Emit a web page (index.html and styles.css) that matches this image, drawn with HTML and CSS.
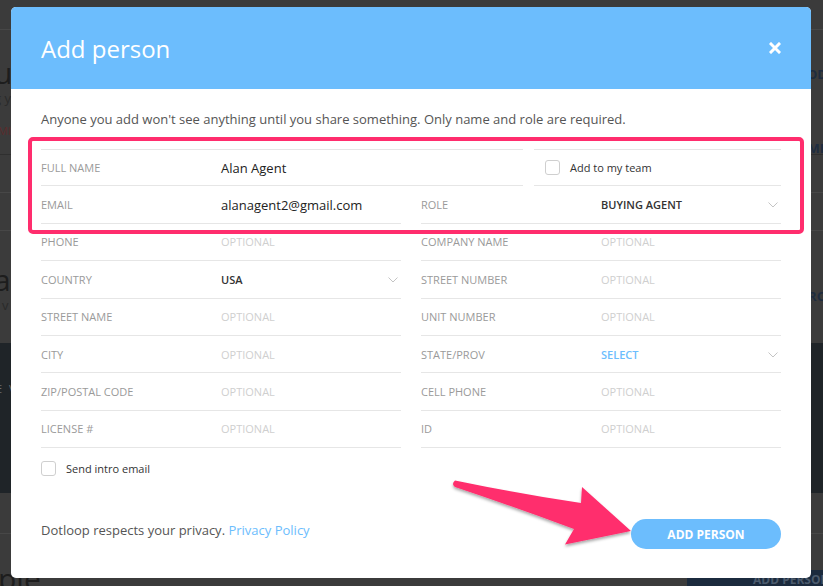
FILE: index.html
```html
<!DOCTYPE html>
<html>
<head>
<meta charset="utf-8">
<link rel="stylesheet" href="styles.css">
</head>
<body>
<div class="page">
  <div class="bg-row bg-top"></div>
  <div class="bg-row bg-head">
    <div class="bg-left">
      <span class="bg-big">u</span>
      <span class="bg-small">g y</span>
      <span class="bg-red">MIT</span>
    </div>
    <div class="bg-right">
      <span class="bg-navy bg-od">OD</span>
      <span class="bg-navy bg-me">ME</span>
    </div>
  </div>
  <div class="bg-row bg-line"></div>
  <div class="bg-row bg-line"></div>
  <div class="bg-row bg-mid">
    <div class="bg-left">
      <span class="bg-big">al</span>
      <span class="bg-small">t v</span>
    </div>
    <div class="bg-right">
      <span class="bg-navy bg-ro">RO</span>
    </div>
  </div>
  <div class="bg-row bg-image"><span class="bg-imgtext">E V</span></div>
  <div class="bg-row bg-foot">
    <span class="bg-big bg-ple">ple</span>
    <span class="bg-btn">ADD PERSON</span>
  </div>
</div>

<div class="modal">
  <div class="modal-header">
    <h1 class="modal-title">Add person</h1>
    <svg class="close" width="12" height="12" viewBox="0 0 12 12"><path d="M2 2L10 10M10 2L2 10" stroke="#fff" stroke-width="3" stroke-linecap="square"/></svg>
  </div>
  <div class="modal-body">
    <p class="intro">Anyone you add won't see anything until you share something. Only name and role are required.</p>

    <div class="row-top">
      <div class="field">
        <span class="label">FULL NAME</span>
        <span class="value">Alan Agent</span>
      </div>
      <div class="field check-field">
        <span class="checkbox"></span>
        <span class="check-label">Add to my team</span>
      </div>
    </div>

    <div class="grid">
      <div class="field"><span class="label">EMAIL</span><span class="value">alanagent2@gmail.com</span></div>
      <div class="field"><span class="label">ROLE</span><span class="value caps">BUYING AGENT</span><svg class="chev" width="10" height="6" viewBox="0 0 10 6"><path d="M0.5 0.5L5 5L9.5 0.5" fill="none" stroke="#c4c4c4" stroke-width="1"/></svg></div>

      <div class="field"><span class="label">PHONE</span><span class="placeholder">OPTIONAL</span></div>
      <div class="field"><span class="label">COMPANY NAME</span><span class="placeholder">OPTIONAL</span></div>

      <div class="field"><span class="label">COUNTRY</span><span class="value caps">USA</span><svg class="chev" width="10" height="6" viewBox="0 0 10 6"><path d="M0.5 0.5L5 5L9.5 0.5" fill="none" stroke="#c4c4c4" stroke-width="1"/></svg></div>
      <div class="field"><span class="label">STREET NUMBER</span><span class="placeholder">OPTIONAL</span></div>

      <div class="field"><span class="label">STREET NAME</span><span class="placeholder">OPTIONAL</span></div>
      <div class="field"><span class="label">UNIT NUMBER</span><span class="placeholder">OPTIONAL</span></div>

      <div class="field"><span class="label">CITY</span><span class="placeholder">OPTIONAL</span></div>
      <div class="field"><span class="label">STATE/PROV</span><span class="value caps select">SELECT</span><svg class="chev" width="10" height="6" viewBox="0 0 10 6"><path d="M0.5 0.5L5 5L9.5 0.5" fill="none" stroke="#c4c4c4" stroke-width="1"/></svg></div>

      <div class="field"><span class="label">ZIP/POSTAL CODE</span><span class="placeholder">OPTIONAL</span></div>
      <div class="field"><span class="label">CELL PHONE</span><span class="placeholder">OPTIONAL</span></div>

      <div class="field"><span class="label">LICENSE #</span><span class="placeholder">OPTIONAL</span></div>
      <div class="field"><span class="label">ID</span><span class="placeholder">OPTIONAL</span></div>
    </div>

    <div class="intro-email">
      <span class="checkbox"></span>
      <span class="check-label">Send intro email</span>
    </div>

    <div class="footer">
      <p class="privacy">Dotloop respects your privacy. <a class="link">Privacy Policy</a></p>
      <button class="add-btn">ADD PERSON</button>
    </div>
  </div>
</div>

<div class="highlight"></div>
<svg class="arrow" width="823" height="586" viewBox="0 0 823 586">
  <defs>
    <filter id="sh" x="-20%" y="-20%" width="140%" height="140%">
      <feDropShadow dx="0" dy="2" stdDeviation="1.5" flood-color="#000" flood-opacity="0.35"/>
    </filter>
  </defs>
  <path filter="url(#sh)" fill="#ff2d6d" d="M455 480.5 Q520 494 581 503 L582 487 L631 531 L565 544.5 L574 529 Q512 506 455 487 Q451 484 455 480.5 Z"/>
</svg>
</body>
</html>
```

FILE: styles.css
```css
* { box-sizing: border-box; }
html, body { margin: 0; padding: 0; }
body {
  width: 823px;
  height: 586px;
  overflow: hidden;
  background: #3b3b3b;
  font-family: "Open Sans", "Liberation Sans", sans-serif;
  position: relative;
}

/* backdrop page (dimmed) */
.page { width: 823px; height: 586px; display: flex; flex-direction: column; }
.bg-row { width: 100%; }
.bg-top { height: 30px; border-bottom: 1px solid #474747; }
.bg-head { height: 125px; display: flex; justify-content: space-between; border-bottom: 1px solid #2f2f2f; }
.bg-left { display: flex; flex-direction: column; margin-left: -6px; }
.bg-right { display: flex; flex-direction: column; align-items: flex-end; margin-right: -4px; }
.bg-big { font-size: 30px; color: #1d1d1d; line-height: 30px; }
.bg-head .bg-big { margin-top: 28px; }
.bg-small { font-size: 13px; color: #2a2a2a; line-height: 16px; margin-top: 2px; }
.bg-red { font-size: 11px; color: #5c2b2b; margin-top: 18px; margin-left: 4px; line-height: 14px; }
.bg-navy { font-size: 13px; font-weight: 700; color: #1e2c3f; line-height: 16px; }
.bg-od { margin-top: 36px; }
.bg-me { margin-top: 58px; }
.bg-line { height: 38px; border-bottom: 1px solid #474747; }
.bg-mid { height: 112px; display: flex; justify-content: space-between; }
.bg-mid .bg-big { margin-top: 34px; }
.bg-ro { margin-top: 57px; }
.bg-image { height: 150px; background: #1f2428; }
.bg-imgtext { display: block; margin-top: 38px; margin-left: -4px; font-size: 11px; color: #6a6e72; letter-spacing: 2px; }
.bg-foot { flex: 1; display: flex; justify-content: space-between; align-items: flex-end; border-top: 1px solid #474747; margin-top: 40px; }
.bg-ple { margin-left: -2px; margin-bottom: -8px; }
.bg-btn { background: #1b2a3d; color: #4b5a6c; font-size: 12px; font-weight: 700; width: 136px; height: 16px; line-height: 20px; padding-left: 66px; overflow: hidden; white-space: nowrap; }

/* modal */
.modal {
  position: absolute;
  left: 11px;
  top: 7px;
  width: 800px;
  height: 571px;
  background: #fff;
  border-radius: 5px;
  overflow: hidden;
  display: flex;
  flex-direction: column;
}
.modal-header {
  height: 82px;
  background: #6cbdfd;
  display: flex;
  align-items: center;
  justify-content: space-between;
  padding: 0 30px;
}
.modal-title {
  margin: 0;
  font-weight: 400;
  font-size: 24px;
  color: #fff;
  line-height: 32px;
  margin-top: 1px;
}
.close { display: block; }
.modal-body { padding: 0 30px; display: flex; flex-direction: column; }
.intro {
  margin: 21px 0 0 0;
  font-size: 13px;
  line-height: 18px;
  color: #555;
}

.row-top {
  margin-top: 21px;
  display: grid;
  grid-template-columns: 482px 247px;
  column-gap: 11px;
}
.grid {
  display: grid;
  grid-template-columns: 360px 360px;
  column-gap: 20px;
}
.field {
  height: 37.4px;
  border-bottom: 1px solid #e6e6e6;
  display: flex;
  align-items: center;
  position: relative;
}
.row-top .field { border-top: 1px solid #e6e6e6; height: 37.4px; }
.label {
  width: 180px;
  flex: none;
  font-size: 11px;
  color: #9a9a9a;
  font-weight: 500;
}
.value { font-size: 13px; color: #222; }
.value.caps { font-size: 11px; font-weight: 600; color: #333; }
.value.select { color: #6cbdfd; }
.placeholder { font-size: 11px; color: #cfcfcf; }
.chev { position: absolute; right: 3px; top: 16px; }

.check-field { padding-left: 11px; }
.checkbox {
  display: inline-block;
  width: 15px;
  height: 15px;
  border: 1px solid #cfcfcf;
  border-radius: 3px;
  flex: none;
}
.check-label { font-size: 11px; color: #333; font-weight: 500; margin-left: 10px; }

.intro-email { height: 40px; display: flex; align-items: center; }

.footer {
  margin-top: 31px;
  display: flex;
  justify-content: space-between;
  align-items: flex-start;
}
.privacy { margin: 2px 0 0 0; font-size: 13px; line-height: 18px; color: #555; }
.link { color: #6cbdfd; }
.add-btn {
  width: 150px;
  height: 30px;
  border: 0;
  border-radius: 15px;
  background: #6cbdfd;
  color: #fff;
  font-family: "Open Sans", "Liberation Sans", sans-serif;
  font-size: 12px;
  font-weight: 700;
  padding: 0;
}

/* annotation overlays */
.highlight {
  position: absolute;
  left: 28px;
  top: 137px;
  width: 776px;
  height: 97px;
  border: 4px solid #ff2d6d;
  border-radius: 5px;
}
.arrow { position: absolute; left: 0; top: 0; pointer-events: none; }
```
